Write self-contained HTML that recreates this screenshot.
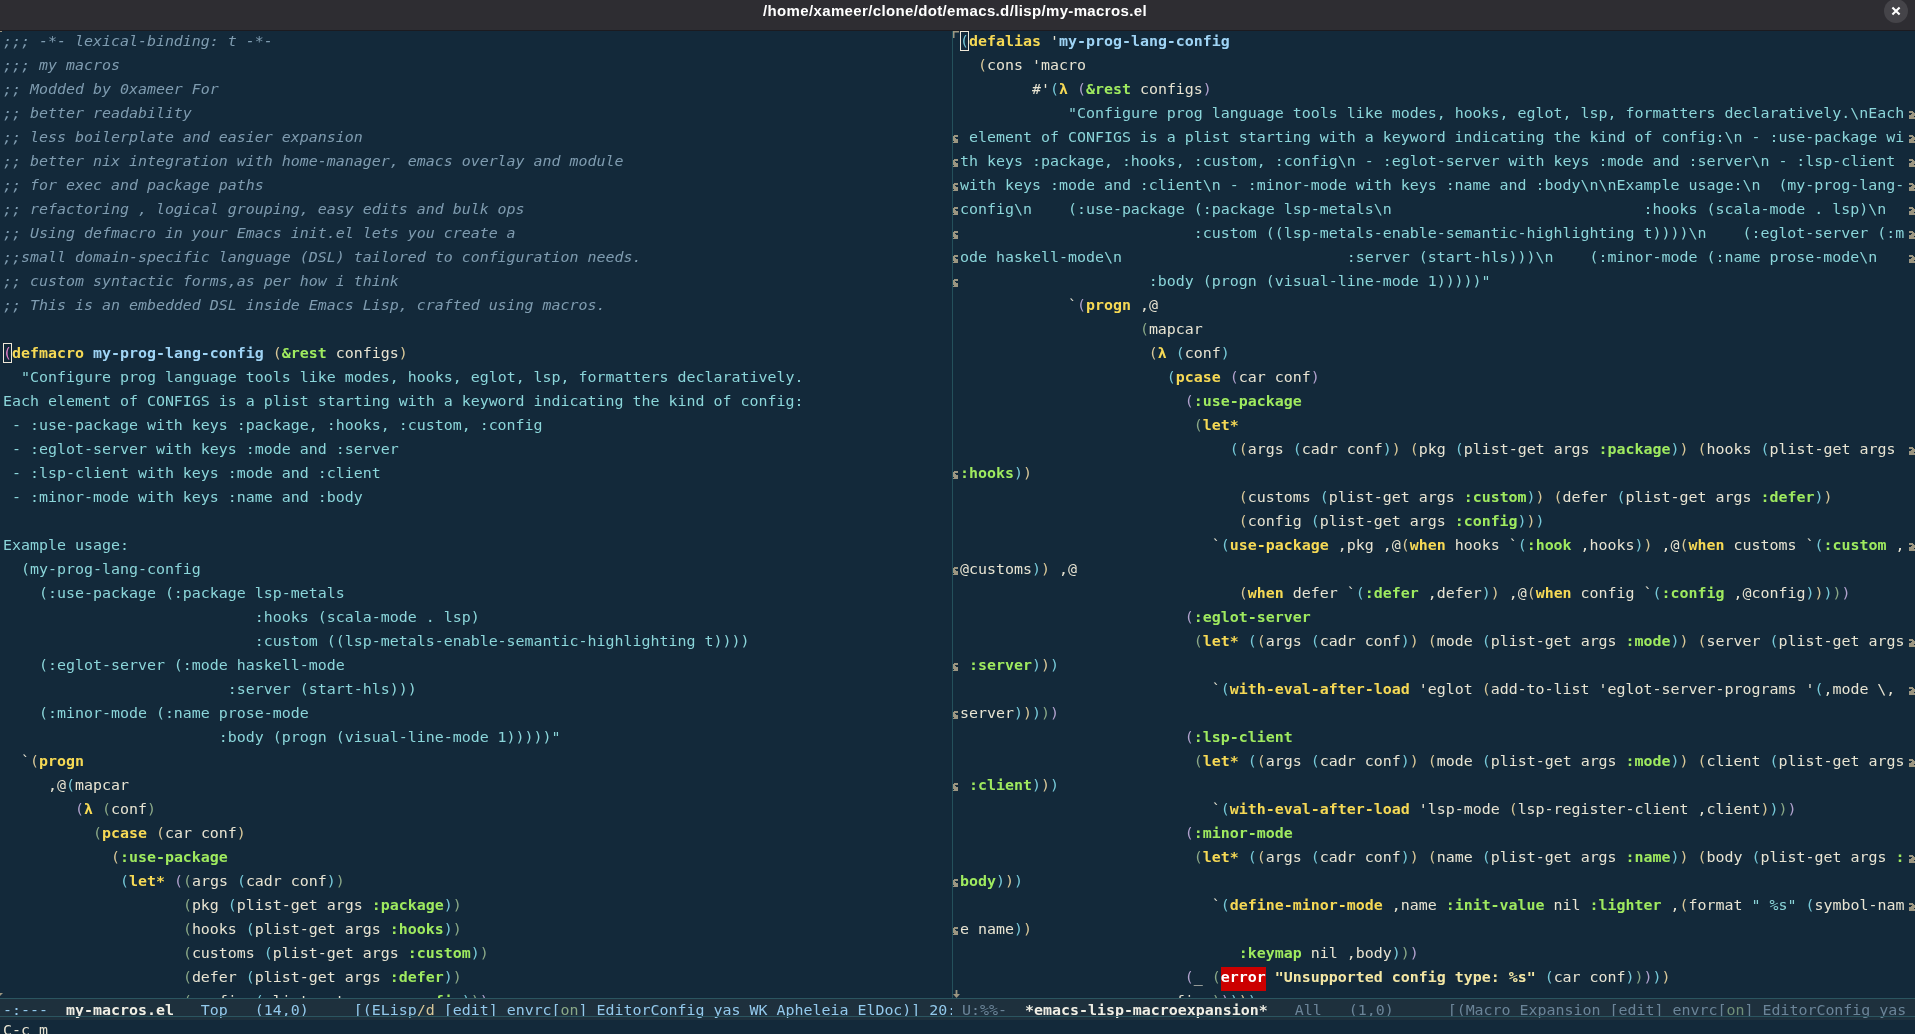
<!DOCTYPE html>
<html><head><meta charset="utf-8"><title>emacs</title>
<style>
html,body{margin:0;padding:0;}
body{width:1915px;height:1034px;overflow:hidden;background:#13293a;position:relative;
 font-family:"DejaVu Sans Mono", "Liberation Mono", monospace;font-size:14.949px;color:#e8e4d2;}
.tb{position:absolute;left:0;top:0;width:1915px;height:30px;background:#2e2d32;border-bottom:1px solid #1c1b20;}
.tt{position:absolute;left:0;top:0;width:1910px;text-align:center;font-family:"Liberation Sans",sans-serif;font-weight:bold;font-size:15px;letter-spacing:0.355px;line-height:22px;color:#fff;white-space:pre;}
.cb{position:absolute;left:1884px;top:-1px;width:24px;height:24px;border-radius:12px;background:#454449;}
.ln{position:absolute;height:24px;line-height:24px;white-space:pre;}
#all{position:absolute;left:0;top:0;width:1915px;height:1034px;overflow:hidden;will-change:transform;}
.L{left:3px;}
.R{left:960px;}
.comment{color:#7f9cb0;font-style:italic;}
.string{color:#8bd6da;}
.kw{color:#f6d955;font-weight:bold;}
.const{color:#9fea5f;font-weight:bold;}
.fn{color:#9fd4f5;font-weight:bold;}
.estr{color:#f3e6a3;font-weight:bold;}
.err{color:#fff;font-weight:bold;}
.box{position:absolute;width:7px;height:18px;border:1px solid #efe9d9;}
.pm{color:#e481c9;}
.ml{position:absolute;top:998px;height:22px;background:#1e303d;overflow:hidden;}
.ml:before{content:"";position:absolute;left:0;top:0;width:100%;height:1px;background:#2b5560;}
.ml:after{content:"";position:absolute;left:0;top:18px;width:100%;height:1px;background:#2b5560;}
.mt{position:absolute;top:0px;height:24px;line-height:24px;white-space:pre;}
.bn{color:#f0eee4;font-weight:bold;}
.p0{color:#76c9d8;}
.p1{color:#d8c798;}
.p2{color:#76c9d8;}
.p3{color:#b0a1cd;}
.p4{color:#8aa887;}
.p5{color:#d8c798;}
.p6{color:#76c9d8;}
.p7{color:#b0a1cd;}
.p8{color:#8aa887;}
</style></head>
<body><div id="all">
<div class="tb"><div class="tt">/home/xameer/clone/dot/emacs.d/lisp/my-macros.el</div><div class="cb"><svg width="24" height="24" viewBox="0 0 24 24" style="position:absolute;left:0;top:0"><path d="M8.4 8.4 L15.6 15.6 M15.6 8.4 L8.4 15.6" stroke="#fff" stroke-width="2.1" stroke-linecap="butt" fill="none"/></svg></div></div>

<div id="left">
<div class="ln L" style="top:29px"><span class="comment">;;; -*- lexical-binding: t -*-</span></div>
<div class="ln L" style="top:53px"><span class="comment">;;; my macros</span></div>
<div class="ln L" style="top:77px"><span class="comment">;; Modded by 0xameer For</span></div>
<div class="ln L" style="top:101px"><span class="comment">;; better readability</span></div>
<div class="ln L" style="top:125px"><span class="comment">;; less boilerplate and easier expansion</span></div>
<div class="ln L" style="top:149px"><span class="comment">;; better nix integration with home-manager, emacs overlay and module</span></div>
<div class="ln L" style="top:173px"><span class="comment">;; for exec and package paths</span></div>
<div class="ln L" style="top:197px"><span class="comment">;; refactoring , logical grouping, easy edits and bulk ops</span></div>
<div class="ln L" style="top:221px"><span class="comment">;; Using defmacro in your Emacs init.el lets you create a</span></div>
<div class="ln L" style="top:245px"><span class="comment">;;small domain-specific language (DSL) tailored to configuration needs.</span></div>
<div class="ln L" style="top:269px"><span class="comment">;; custom syntactic forms,as per how i think</span></div>
<div class="ln L" style="top:293px"><span class="comment">;; This is an embedded DSL inside Emacs Lisp, crafted using macros.</span></div>
<div class="ln L" style="top:341px"><span class="pm">(</span><span class="kw">defmacro</span> <span class="fn">my-prog-lang-config</span> <span class="p1">(</span><span class="const">&amp;rest</span> configs<span class="p1">)</span></div>
<div class="ln L" style="top:365px">  <span class="string">"</span><span class="string">Configure prog language tools like modes, hooks, eglot, lsp, formatters declaratively.</span></div>
<div class="ln L" style="top:389px"><span class="string">Each element of CONFIGS is a plist starting with a keyword indicating the kind of config:</span></div>
<div class="ln L" style="top:413px"><span class="string"> - :use-package with keys :package, :hooks, :custom, :config</span></div>
<div class="ln L" style="top:437px"><span class="string"> - :eglot-server with keys :mode and :server</span></div>
<div class="ln L" style="top:461px"><span class="string"> - :lsp-client with keys :mode and :client</span></div>
<div class="ln L" style="top:485px"><span class="string"> - :minor-mode with keys :name and :body</span></div>
<div class="ln L" style="top:533px"><span class="string">Example usage:</span></div>
<div class="ln L" style="top:557px"><span class="string">  (my-prog-lang-config</span></div>
<div class="ln L" style="top:581px"><span class="string">    (:use-package (:package lsp-metals</span></div>
<div class="ln L" style="top:605px"><span class="string">                            :hooks (scala-mode . lsp)</span></div>
<div class="ln L" style="top:629px"><span class="string">                            :custom ((lsp-metals-enable-semantic-highlighting t))))</span></div>
<div class="ln L" style="top:653px"><span class="string">    (:eglot-server (:mode haskell-mode</span></div>
<div class="ln L" style="top:677px"><span class="string">                         :server (start-hls)))</span></div>
<div class="ln L" style="top:701px"><span class="string">    (:minor-mode (:name prose-mode</span></div>
<div class="ln L" style="top:725px"><span class="string">                        :body (progn (visual-line-mode 1)))))"</span></div>
<div class="ln L" style="top:749px">  `<span class="p1">(</span><span class="kw">progn</span></div>
<div class="ln L" style="top:773px">     ,@<span class="p2">(</span>mapcar</div>
<div class="ln L" style="top:797px">        <span class="p3">(</span><span class="kw">λ</span> <span class="p4">(</span>conf<span class="p4">)</span></div>
<div class="ln L" style="top:821px">          <span class="p4">(</span><span class="kw">pcase</span> <span class="p5">(</span>car conf<span class="p5">)</span></div>
<div class="ln L" style="top:845px">            <span class="p5">(</span><span class="const">:use-package</span></div>
<div class="ln L" style="top:869px">             <span class="p6">(</span><span class="kw">let*</span> <span class="p7">(</span><span class="p8">(</span>args <span class="p0">(</span>cadr conf<span class="p0">)</span><span class="p8">)</span></div>
<div class="ln L" style="top:893px">                    <span class="p8">(</span>pkg <span class="p0">(</span>plist-get args <span class="const">:package</span><span class="p0">)</span><span class="p8">)</span></div>
<div class="ln L" style="top:917px">                    <span class="p8">(</span>hooks <span class="p0">(</span>plist-get args <span class="const">:hooks</span><span class="p0">)</span><span class="p8">)</span></div>
<div class="ln L" style="top:941px">                    <span class="p8">(</span>customs <span class="p0">(</span>plist-get args <span class="const">:custom</span><span class="p0">)</span><span class="p8">)</span></div>
<div class="ln L" style="top:965px">                    <span class="p8">(</span>defer <span class="p0">(</span>plist-get args <span class="const">:defer</span><span class="p0">)</span><span class="p8">)</span></div>
<div class="ln L" style="top:989px">                    <span class="p8">(</span>config <span class="p0">(</span>plist-get args <span class="const">:config</span><span class="p0">)</span><span class="p8">)</span><span class="p7">)</span></div>
</div>
<div id="right">
<div class="ln R" style="top:29px"><span class="p0">(</span><span class="kw">defalias</span> '<span class="fn">my-prog-lang-config</span></div>
<div class="ln R" style="top:53px">  <span class="p1">(</span>cons 'macro</div>
<div class="ln R" style="top:77px">        #'<span class="p2">(</span><span class="kw">λ</span> <span class="p3">(</span><span class="const">&amp;rest</span> configs<span class="p3">)</span></div>
<div class="ln R" style="top:101px">            <span class="string">"</span><span class="string">Configure prog language tools like modes, hooks, eglot, lsp, formatters declaratively.\nEach</span></div>
<svg class="fr" style="position:absolute;left:1909px;top:111px" width="6" height="8" viewBox="0 0 6 8"><path d="M0 0H4V1H5V2H6V5H5V6H6V8H0V4H2V3H3V2H0Z" fill="#9c9681"/></svg>
<div class="ln R" style="top:125px"><span class="string"> element of CONFIGS is a plist starting with a keyword indicating the kind of config:\n - :use-package wi</span></div>
<svg class="fl" style="position:absolute;left:953px;top:135px" width="5" height="8" viewBox="0 0 5 8"><path d="M1 0H5V2H2V3H3V4H5V8H0V7H1V6H0V1H1Z" fill="#9c9681"/></svg>
<svg class="fr" style="position:absolute;left:1909px;top:135px" width="6" height="8" viewBox="0 0 6 8"><path d="M0 0H4V1H5V2H6V5H5V6H6V8H0V4H2V3H3V2H0Z" fill="#9c9681"/></svg>
<div class="ln R" style="top:149px"><span class="string">th keys :package, :hooks, :custom, :config\n - :eglot-server with keys :mode and :server\n - :lsp-client </span></div>
<svg class="fl" style="position:absolute;left:953px;top:159px" width="5" height="8" viewBox="0 0 5 8"><path d="M1 0H5V2H2V3H3V4H5V8H0V7H1V6H0V1H1Z" fill="#9c9681"/></svg>
<svg class="fr" style="position:absolute;left:1909px;top:159px" width="6" height="8" viewBox="0 0 6 8"><path d="M0 0H4V1H5V2H6V5H5V6H6V8H0V4H2V3H3V2H0Z" fill="#9c9681"/></svg>
<div class="ln R" style="top:173px"><span class="string">with keys :mode and :client\n - :minor-mode with keys :name and :body\n\nExample usage:\n  (my-prog-lang-</span></div>
<svg class="fl" style="position:absolute;left:953px;top:183px" width="5" height="8" viewBox="0 0 5 8"><path d="M1 0H5V2H2V3H3V4H5V8H0V7H1V6H0V1H1Z" fill="#9c9681"/></svg>
<svg class="fr" style="position:absolute;left:1909px;top:183px" width="6" height="8" viewBox="0 0 6 8"><path d="M0 0H4V1H5V2H6V5H5V6H6V8H0V4H2V3H3V2H0Z" fill="#9c9681"/></svg>
<div class="ln R" style="top:197px"><span class="string">config\n    (:use-package (:package lsp-metals\n                            :hooks (scala-mode . lsp)\n  </span></div>
<svg class="fl" style="position:absolute;left:953px;top:207px" width="5" height="8" viewBox="0 0 5 8"><path d="M1 0H5V2H2V3H3V4H5V8H0V7H1V6H0V1H1Z" fill="#9c9681"/></svg>
<svg class="fr" style="position:absolute;left:1909px;top:207px" width="6" height="8" viewBox="0 0 6 8"><path d="M0 0H4V1H5V2H6V5H5V6H6V8H0V4H2V3H3V2H0Z" fill="#9c9681"/></svg>
<div class="ln R" style="top:221px"><span class="string">                          :custom ((lsp-metals-enable-semantic-highlighting t))))\n    (:eglot-server (:m</span></div>
<svg class="fl" style="position:absolute;left:953px;top:231px" width="5" height="8" viewBox="0 0 5 8"><path d="M1 0H5V2H2V3H3V4H5V8H0V7H1V6H0V1H1Z" fill="#9c9681"/></svg>
<svg class="fr" style="position:absolute;left:1909px;top:231px" width="6" height="8" viewBox="0 0 6 8"><path d="M0 0H4V1H5V2H6V5H5V6H6V8H0V4H2V3H3V2H0Z" fill="#9c9681"/></svg>
<div class="ln R" style="top:245px"><span class="string">ode haskell-mode\n                         :server (start-hls)))\n    (:minor-mode (:name prose-mode\n   </span></div>
<svg class="fl" style="position:absolute;left:953px;top:255px" width="5" height="8" viewBox="0 0 5 8"><path d="M1 0H5V2H2V3H3V4H5V8H0V7H1V6H0V1H1Z" fill="#9c9681"/></svg>
<svg class="fr" style="position:absolute;left:1909px;top:255px" width="6" height="8" viewBox="0 0 6 8"><path d="M0 0H4V1H5V2H6V5H5V6H6V8H0V4H2V3H3V2H0Z" fill="#9c9681"/></svg>
<div class="ln R" style="top:269px"><span class="string">                     :body (progn (visual-line-mode 1)))))"</span></div>
<svg class="fl" style="position:absolute;left:953px;top:279px" width="5" height="8" viewBox="0 0 5 8"><path d="M1 0H5V2H2V3H3V4H5V8H0V7H1V6H0V1H1Z" fill="#9c9681"/></svg>
<div class="ln R" style="top:293px">            `<span class="p3">(</span><span class="kw">progn</span> ,@</div>
<div class="ln R" style="top:317px">                    <span class="p4">(</span>mapcar</div>
<div class="ln R" style="top:341px">                     <span class="p5">(</span><span class="kw">λ</span> <span class="p6">(</span>conf<span class="p6">)</span></div>
<div class="ln R" style="top:365px">                       <span class="p6">(</span><span class="kw">pcase</span> <span class="p7">(</span>car conf<span class="p7">)</span></div>
<div class="ln R" style="top:389px">                         <span class="p7">(</span><span class="const">:use-package</span></div>
<div class="ln R" style="top:413px">                          <span class="p8">(</span><span class="kw">let*</span></div>
<div class="ln R" style="top:437px">                              <span class="p0">(</span><span class="p1">(</span>args <span class="p2">(</span>cadr conf<span class="p2">)</span><span class="p1">)</span> <span class="p1">(</span>pkg <span class="p2">(</span>plist-get args <span class="const">:package</span><span class="p2">)</span><span class="p1">)</span> <span class="p1">(</span>hooks <span class="p2">(</span>plist-get args </div>
<svg class="fr" style="position:absolute;left:1909px;top:447px" width="6" height="8" viewBox="0 0 6 8"><path d="M0 0H4V1H5V2H6V5H5V6H6V8H0V4H2V3H3V2H0Z" fill="#9c9681"/></svg>
<div class="ln R" style="top:461px"><span class="const">:hooks</span><span class="p2">)</span><span class="p1">)</span></div>
<svg class="fl" style="position:absolute;left:953px;top:471px" width="5" height="8" viewBox="0 0 5 8"><path d="M1 0H5V2H2V3H3V4H5V8H0V7H1V6H0V1H1Z" fill="#9c9681"/></svg>
<div class="ln R" style="top:485px">                               <span class="p1">(</span>customs <span class="p2">(</span>plist-get args <span class="const">:custom</span><span class="p2">)</span><span class="p1">)</span> <span class="p1">(</span>defer <span class="p2">(</span>plist-get args <span class="const">:defer</span><span class="p2">)</span><span class="p1">)</span></div>
<div class="ln R" style="top:509px">                               <span class="p1">(</span>config <span class="p2">(</span>plist-get args <span class="const">:config</span><span class="p2">)</span><span class="p1">)</span><span class="p0">)</span></div>
<div class="ln R" style="top:533px">                            `<span class="p0">(</span><span class="kw">use-package</span> ,pkg ,@<span class="p1">(</span><span class="kw">when</span> hooks `<span class="p2">(</span><span class="const">:hook</span> ,hooks<span class="p2">)</span><span class="p1">)</span> ,@<span class="p1">(</span><span class="kw">when</span> customs `<span class="p2">(</span><span class="const">:custom</span> ,</div>
<svg class="fr" style="position:absolute;left:1909px;top:543px" width="6" height="8" viewBox="0 0 6 8"><path d="M0 0H4V1H5V2H6V5H5V6H6V8H0V4H2V3H3V2H0Z" fill="#9c9681"/></svg>
<div class="ln R" style="top:557px">@customs<span class="p2">)</span><span class="p1">)</span> ,@</div>
<svg class="fl" style="position:absolute;left:953px;top:567px" width="5" height="8" viewBox="0 0 5 8"><path d="M1 0H5V2H2V3H3V4H5V8H0V7H1V6H0V1H1Z" fill="#9c9681"/></svg>
<div class="ln R" style="top:581px">                               <span class="p1">(</span><span class="kw">when</span> defer `<span class="p2">(</span><span class="const">:defer</span> ,defer<span class="p2">)</span><span class="p1">)</span> ,@<span class="p1">(</span><span class="kw">when</span> config `<span class="p2">(</span><span class="const">:config</span> ,@config<span class="p2">)</span><span class="p1">)</span><span class="p0">)</span><span class="p8">)</span><span class="p7">)</span></div>
<div class="ln R" style="top:605px">                         <span class="p7">(</span><span class="const">:eglot-server</span></div>
<div class="ln R" style="top:629px">                          <span class="p8">(</span><span class="kw">let*</span> <span class="p0">(</span><span class="p1">(</span>args <span class="p2">(</span>cadr conf<span class="p2">)</span><span class="p1">)</span> <span class="p1">(</span>mode <span class="p2">(</span>plist-get args <span class="const">:mode</span><span class="p2">)</span><span class="p1">)</span> <span class="p1">(</span>server <span class="p2">(</span>plist-get args</div>
<svg class="fr" style="position:absolute;left:1909px;top:639px" width="6" height="8" viewBox="0 0 6 8"><path d="M0 0H4V1H5V2H6V5H5V6H6V8H0V4H2V3H3V2H0Z" fill="#9c9681"/></svg>
<div class="ln R" style="top:653px"> <span class="const">:server</span><span class="p2">)</span><span class="p1">)</span><span class="p0">)</span></div>
<svg class="fl" style="position:absolute;left:953px;top:663px" width="5" height="8" viewBox="0 0 5 8"><path d="M1 0H5V2H2V3H3V4H5V8H0V7H1V6H0V1H1Z" fill="#9c9681"/></svg>
<div class="ln R" style="top:677px">                            `<span class="p0">(</span><span class="kw">with-eval-after-load</span> 'eglot <span class="p1">(</span>add-to-list 'eglot-server-programs '<span class="p2">(</span>,mode \, </div>
<svg class="fr" style="position:absolute;left:1909px;top:687px" width="6" height="8" viewBox="0 0 6 8"><path d="M0 0H4V1H5V2H6V5H5V6H6V8H0V4H2V3H3V2H0Z" fill="#9c9681"/></svg>
<div class="ln R" style="top:701px">server<span class="p2">)</span><span class="p1">)</span><span class="p0">)</span><span class="p8">)</span><span class="p7">)</span></div>
<svg class="fl" style="position:absolute;left:953px;top:711px" width="5" height="8" viewBox="0 0 5 8"><path d="M1 0H5V2H2V3H3V4H5V8H0V7H1V6H0V1H1Z" fill="#9c9681"/></svg>
<div class="ln R" style="top:725px">                         <span class="p7">(</span><span class="const">:lsp-client</span></div>
<div class="ln R" style="top:749px">                          <span class="p8">(</span><span class="kw">let*</span> <span class="p0">(</span><span class="p1">(</span>args <span class="p2">(</span>cadr conf<span class="p2">)</span><span class="p1">)</span> <span class="p1">(</span>mode <span class="p2">(</span>plist-get args <span class="const">:mode</span><span class="p2">)</span><span class="p1">)</span> <span class="p1">(</span>client <span class="p2">(</span>plist-get args</div>
<svg class="fr" style="position:absolute;left:1909px;top:759px" width="6" height="8" viewBox="0 0 6 8"><path d="M0 0H4V1H5V2H6V5H5V6H6V8H0V4H2V3H3V2H0Z" fill="#9c9681"/></svg>
<div class="ln R" style="top:773px"> <span class="const">:client</span><span class="p2">)</span><span class="p1">)</span><span class="p0">)</span></div>
<svg class="fl" style="position:absolute;left:953px;top:783px" width="5" height="8" viewBox="0 0 5 8"><path d="M1 0H5V2H2V3H3V4H5V8H0V7H1V6H0V1H1Z" fill="#9c9681"/></svg>
<div class="ln R" style="top:797px">                            `<span class="p0">(</span><span class="kw">with-eval-after-load</span> 'lsp-mode <span class="p1">(</span>lsp-register-client ,client<span class="p1">)</span><span class="p0">)</span><span class="p8">)</span><span class="p7">)</span></div>
<div class="ln R" style="top:821px">                         <span class="p7">(</span><span class="const">:minor-mode</span></div>
<div class="ln R" style="top:845px">                          <span class="p8">(</span><span class="kw">let*</span> <span class="p0">(</span><span class="p1">(</span>args <span class="p2">(</span>cadr conf<span class="p2">)</span><span class="p1">)</span> <span class="p1">(</span>name <span class="p2">(</span>plist-get args <span class="const">:name</span><span class="p2">)</span><span class="p1">)</span> <span class="p1">(</span>body <span class="p2">(</span>plist-get args <span class="const">:</span></div>
<svg class="fr" style="position:absolute;left:1909px;top:855px" width="6" height="8" viewBox="0 0 6 8"><path d="M0 0H4V1H5V2H6V5H5V6H6V8H0V4H2V3H3V2H0Z" fill="#9c9681"/></svg>
<div class="ln R" style="top:869px"><span class="const">body</span><span class="p2">)</span><span class="p1">)</span><span class="p0">)</span></div>
<svg class="fl" style="position:absolute;left:953px;top:879px" width="5" height="8" viewBox="0 0 5 8"><path d="M1 0H5V2H2V3H3V4H5V8H0V7H1V6H0V1H1Z" fill="#9c9681"/></svg>
<div class="ln R" style="top:893px">                            `<span class="p0">(</span><span class="kw">define-minor-mode</span> ,name <span class="const">:init-value</span> nil <span class="const">:lighter</span> ,<span class="p1">(</span>format <span class="string">"</span><span class="string"> %s"</span> <span class="p2">(</span>symbol-nam</div>
<svg class="fr" style="position:absolute;left:1909px;top:903px" width="6" height="8" viewBox="0 0 6 8"><path d="M0 0H4V1H5V2H6V5H5V6H6V8H0V4H2V3H3V2H0Z" fill="#9c9681"/></svg>
<div class="ln R" style="top:917px">e name<span class="p2">)</span><span class="p1">)</span></div>
<svg class="fl" style="position:absolute;left:953px;top:927px" width="5" height="8" viewBox="0 0 5 8"><path d="M1 0H5V2H2V3H3V4H5V8H0V7H1V6H0V1H1Z" fill="#9c9681"/></svg>
<div class="ln R" style="top:941px">                               <span class="const">:keymap</span> nil ,body<span class="p0">)</span><span class="p8">)</span><span class="p7">)</span></div>
<div style="position:absolute;left:1221px;top:967px;width:45px;height:24px;background:#cc0000"></div>
<div class="ln R" style="top:965px">                         <span class="p7">(</span>_ <span class="p8">(</span><span class="err">error</span> <span class="estr">"</span><span class="estr">Unsupported config type: %s"</span> <span class="p0">(</span>car conf<span class="p0">)</span><span class="p8">)</span><span class="p7">)</span><span class="p6">)</span><span class="p5">)</span></div>
<div class="ln R" style="top:989px">                     configs<span class="p4">)</span><span class="p3">)</span><span class="p2">)</span><span class="p1">)</span><span class="p0">)</span></div>
</div>
<div class="box" style="left:3px;top:343px"></div><div class="box" style="left:960px;top:31px"></div>
<div style="position:absolute;left:952px;top:31px;width:1px;height:967px;background:#24505b"></div>
<svg style="position:absolute;left:953px;top:31px" width="6" height="7" viewBox="0 0 6 7"><path d="M0 0H6V1.5H1.5V7H0Z" fill="#9c9681"/></svg>
<svg style="position:absolute;left:953px;top:990px" width="8" height="8" viewBox="0 0 8 8"><path d="M2.6 0H4.4V4H7L3.5 8L0 4H2.6Z" fill="#9c9681"/></svg>
<svg style="position:absolute;left:0;top:993px" width="3" height="5" viewBox="0 0 3 5"><path d="M0 0H3L0 3Z" fill="#9c9681"/></svg>
<svg style="position:absolute;left:0;top:31px" width="2" height="3" viewBox="0 0 2 3"><path d="M0 0H2V1H0Z" fill="#9c9681"/></svg>
<div class="ml" style="left:0;width:952px;"><div class="mt" style="left:3px;color:#93c9ec">-:---  <b class="bn">my-macros.el</b>   Top   (14,0)     [(ELisp<span style="color:#d8c798">/d</span> [edit] envrc[<span style="color:#8aa887">on</span>] EditorConfig yas WK Apheleia ElDoc)] 20:</div></div>
<div class="ml" style="left:952px;width:963px;"><div class="mt" style="left:1px;color:#6b8498"> U:%%-  <b class="bn">*emacs-lisp-macroexpansion*</b>   All   (1,0)      [(Macro Expansion [edit] envrc[<span style="color:#708f78">on</span>] EditorConfig yas</div></div>
<div class="ln" style="left:3px;top:1018px">C-c m</div>

</div></body></html>
